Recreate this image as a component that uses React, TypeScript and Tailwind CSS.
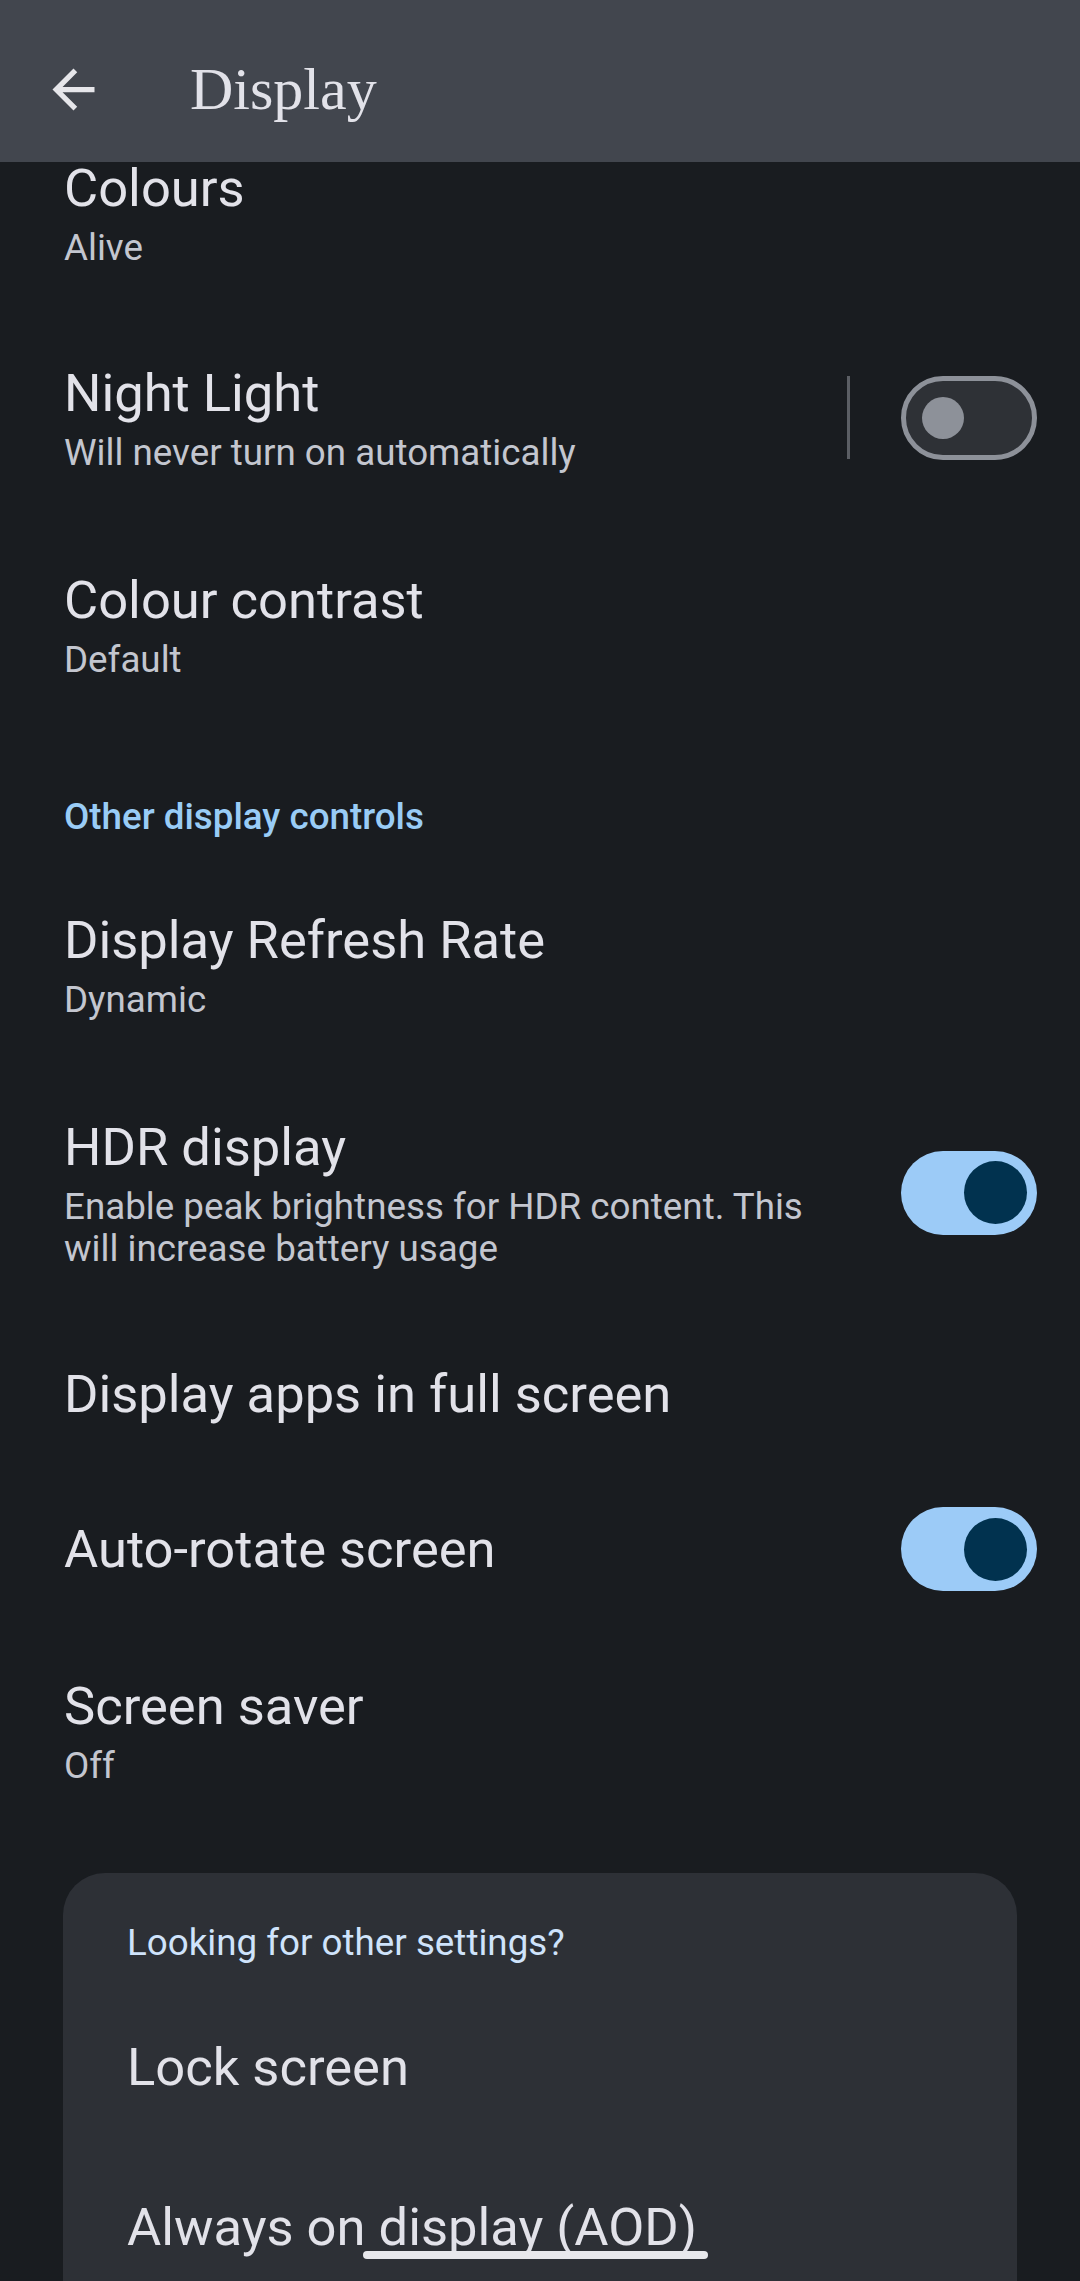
import React from 'react';

type Row = {
  title: string;
  summary?: string;
  toggle?: 'on' | 'off';
  divider?: boolean;
};

const Toggle: React.FC<{ on: boolean }> = ({ on }) =>
  on ? (
    <div className="w-[136px] h-[84px] rounded-full bg-[#9ccbf7] flex items-center justify-end pr-[10px]">
      <div className="w-[63px] h-[63px] rounded-full bg-[#01324f]" />
    </div>
  ) : (
    <div className="w-[136px] h-[84px] rounded-full border-[5px] border-[#8d9199] bg-[#2e3136] flex items-center pl-[16px]">
      <div className="w-[42px] h-[42px] rounded-full bg-[#8d9199]" />
    </div>
  );

const SettingRow: React.FC<{ row: Row }> = ({ row }) => {
  const twoLine = !!row.summary;
  return (
    <div
      className={
        twoLine
          ? 'flex items-center pl-[64px] pr-[43px] pt-[49px] pb-[45px]'
          : 'flex items-center pl-[64px] pr-[43px] h-[155px] pt-[3px]'
      }
    >
      <div className="flex-1 min-w-0">
        <div className="text-[52.5px] leading-[64px] text-[#e2e2e9]">{row.title}</div>
        {row.summary && (
          <div className="mt-[7px] text-[36.75px] leading-[42px] text-[#c3c6cf]">{row.summary}</div>
        )}
      </div>
      {row.toggle && (
        <div className="flex items-center">
          {row.divider && <div className="w-[3px] h-[83px] bg-[#5b5e64] mr-[51px]" />}
          {!row.divider && <div className="w-[67px]" />}
          <Toggle on={row.toggle === 'on'} />
        </div>
      )}
    </div>
  );
};

const topRows: Row[] = [
  { title: 'Colours', summary: 'Alive' },
  { title: 'Night Light', summary: 'Will never turn on automatically', toggle: 'off', divider: true },
  { title: 'Colour contrast', summary: 'Default' },
];

const otherRows: Row[] = [
  { title: 'Display Refresh Rate', summary: 'Dynamic' },
  {
    title: 'HDR display',
    summary: 'Enable peak brightness for HDR content. This will increase battery usage',
    toggle: 'on',
  },
  { title: 'Display apps in full screen' },
  { title: 'Auto-rotate screen', toggle: 'on' },
  { title: 'Screen saver', summary: 'Off' },
];

const App: React.FC = () => {
  return (
    <div className="relative w-[1080px] h-[2281px] overflow-hidden bg-[#191c20] font-[Roboto,sans-serif]">
      {/* Top app bar */}
      <header className="relative z-10 h-[162px] bg-[#42464e] flex items-center pl-[42px] pt-[16px]">
        <svg viewBox="0 0 24 24" className="w-[63px] h-[63px]" fill="#e6e6ea">
          <path d="M20 11H7.83l5.59-5.59L12 4l-8 8 8 8 1.41-1.41L7.83 13H20v-2z" />
        </svg>
        <h1 className="ml-[85px] font-['Liberation_Serif',serif] text-[60px] leading-none text-[#e2e2e9]">
          Display
        </h1>
      </header>

      <main className="-mt-[55px]">
        {topRows.map((r, i) => (
          <div key={r.title} className={i === 0 ? '-mb-[2px]' : ''}>
            <SettingRow row={r} />
          </div>
        ))}

        <div className="pl-[64px] pt-[70px] pb-[21px] text-[36.75px] leading-[42px] font-medium text-[#99ccf6]">
          Other display controls
        </div>

        {otherRows.map((r) => (
          <SettingRow key={r.title} row={r} />
        ))}

        {/* Suggestions card */}
        <div className="mx-[63px] mt-[41px] rounded-[42px] bg-[#2d3036] px-[64px] pt-[49px] pb-[40px]">
          <div className="text-[36.75px] leading-[42px] text-[#cfe3fb]">Looking for other settings?</div>
          <div className="mt-[22px] h-[160px] flex items-center pt-[2px] text-[52.5px] text-[#e2e2e9]">Lock screen</div>
          <div className="h-[160px] flex items-center pt-[2px] text-[52.5px] text-[#e2e2e9]">Always on display (AOD)</div>
        </div>
      </main>

      {/* Gesture handle */}
      <div className="absolute left-[363px] top-[2251px] w-[345px] h-[8px] rounded-full bg-[#e8e8ec]" />
    </div>
  );
};

export default App;
